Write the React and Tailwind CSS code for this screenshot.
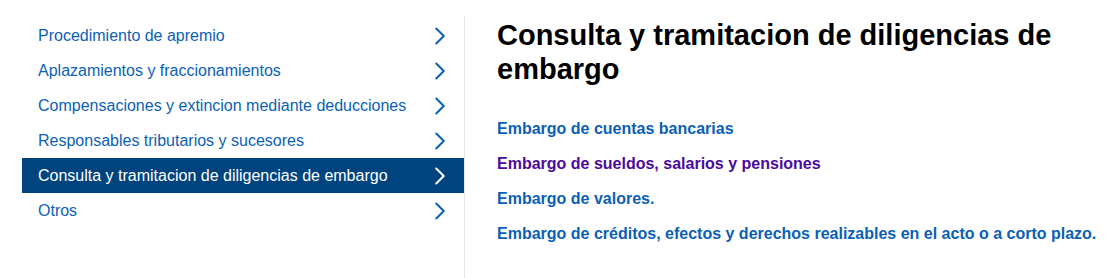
import { ChevronRight } from "lucide-react";

const menu = [
  { label: "Procedimiento de apremio" },
  { label: "Aplazamientos y fraccionamientos" },
  { label: "Compensaciones y extincion mediante deducciones" },
  { label: "Responsables tributarios y sucesores" },
  { label: "Consulta y tramitacion de diligencias de embargo", active: true },
  { label: "Otros" },
];

const links = [
  { label: "Embargo de cuentas bancarias" },
  { label: "Embargo de sueldos, salarios y pensiones", visited: true },
  { label: "Embargo de valores." },
  { label: "Embargo de créditos, efectos y derechos realizables en el acto o a corto plazo." },
];

export default function App() {
  return (
    <div className="w-[1109px] h-[278px] bg-white flex font-['Liberation_Sans',Arial,sans-serif] overflow-hidden">
      {/* sidebar */}
      <nav className="w-[442px] ml-[22px] pt-[18px]">
        <ul>
          {menu.map((item) => (
            <li
              key={item.label}
              className={
                "h-[35px] flex items-center justify-between pl-[16px] pr-[9px] text-[16px] " +
                (item.active ? "bg-[#00447f] text-white" : "text-[#0b5fb5]")
              }
            >
              <span>{item.label}</span>
              <ChevronRight size={30} strokeWidth={1.6} className={item.active ? "text-white" : "text-[#0b5fb5]"} />
            </li>
          ))}
        </ul>
      </nav>

      <div className="w-px bg-[#e3e3e3] mt-[16px]" />

      {/* content */}
      <main className="pl-[32px] pt-[18px]">
        <h1 className="text-[29px] leading-[34px] font-bold text-black w-[590px]">
          Consulta y tramitacion de diligencias de embargo
        </h1>
        <ul className="mt-[25px] flex flex-col">
          {links.map((l) => (
            <li key={l.label} className="h-[35px] flex items-center">
              <a
                href="#"
                className={
                  "text-[16px] font-bold " +
                  (l.visited ? "text-[#4b0a9e]" : "text-[#0b5fb5]")
                }
              >
                {l.label}
              </a>
            </li>
          ))}
        </ul>
      </main>
    </div>
  );
}
